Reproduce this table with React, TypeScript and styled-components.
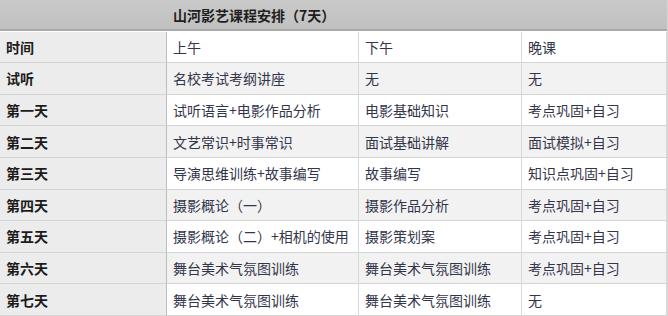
import React from "react";
import styled, { createGlobalStyle } from "styled-components";

const Global = createGlobalStyle`
  html, body { margin: 0; padding: 0; background: #ffffff; }
  body { font-family: "Noto Sans CJK SC", "Liberation Sans", sans-serif; }
`;

const Table = styled.div`
  width: 667px;
  display: grid;
  grid-template-columns: 167px 192px 163px 145px;
  grid-auto-rows: 31.6px;
  border-right: 1px solid #d6d6d6;
`;

const Header = styled.div`
  grid-column: 1 / -1;
  height: 31px;
  display: grid;
  grid-template-columns: 167px 1fr;
  align-items: center;
  background: linear-gradient(#c9c9c9, #c1c1c1);
  border-bottom: 2px solid #a9a9a9;
  box-sizing: border-box;
`;

const Title = styled.div`
  grid-column: 2;
  padding-left: 6px;
  font-size: 14px;
  font-weight: 700;
  color: #1f1f1f;
`;

const Cell = styled.div<{ $head?: boolean; $alt?: boolean }>`
  display: flex;
  align-items: center;
  padding-left: ${(p) => (p.$head ? "6px" : "6px")};
  box-sizing: border-box;
  font-size: 14px;
  white-space: nowrap;
  overflow: hidden;
  border-bottom: 1px solid #d4d4d4;
  border-right: 1px solid ${(p) => (p.$head ? "#bdbdbd" : "#d8d8d8")};
  background: ${(p) => (p.$head ? "#ececec" : p.$alt ? "#f2f2f2" : "#ffffff")};
  color: ${(p) => (p.$head ? "#1c1c1c" : "#33364a")};
  font-weight: ${(p) => (p.$head ? 700 : 400)};
`;

const rows: string[][] = [
  ["时间", "上午", "下午", "晚课"],
  ["试听", "名校考试考纲讲座", "无", "无"],
  ["第一天", "试听语言+电影作品分析", "电影基础知识", "考点巩固+自习"],
  ["第二天", "文艺常识+时事常识", "面试基础讲解", "面试模拟+自习"],
  ["第三天", "导演思维训练+故事编写", "故事编写", "知识点巩固+自习"],
  ["第四天", "摄影概论（一）", "摄影作品分析", "考点巩固+自习"],
  ["第五天", "摄影概论（二）+相机的使用", "摄影策划案", "考点巩固+自习"],
  ["第六天", "舞台美术气氛图训练", "舞台美术气氛图训练", "考点巩固+自习"],
  ["第七天", "舞台美术气氛图训练", "舞台美术气氛图训练", "无"],
];

export default function App() {
  return (
    <>
      <Global />
      <Table>
        <Header>
          <Title>山河影艺课程安排（7天）</Title>
        </Header>
        {rows.map((r, i) =>
          r.map((c, j) => (
            <Cell key={`${i}-${j}`} $head={j === 0} $alt={i % 2 === 1}>
              {c}
            </Cell>
          ))
        )}
      </Table>
    </>
  );
}
